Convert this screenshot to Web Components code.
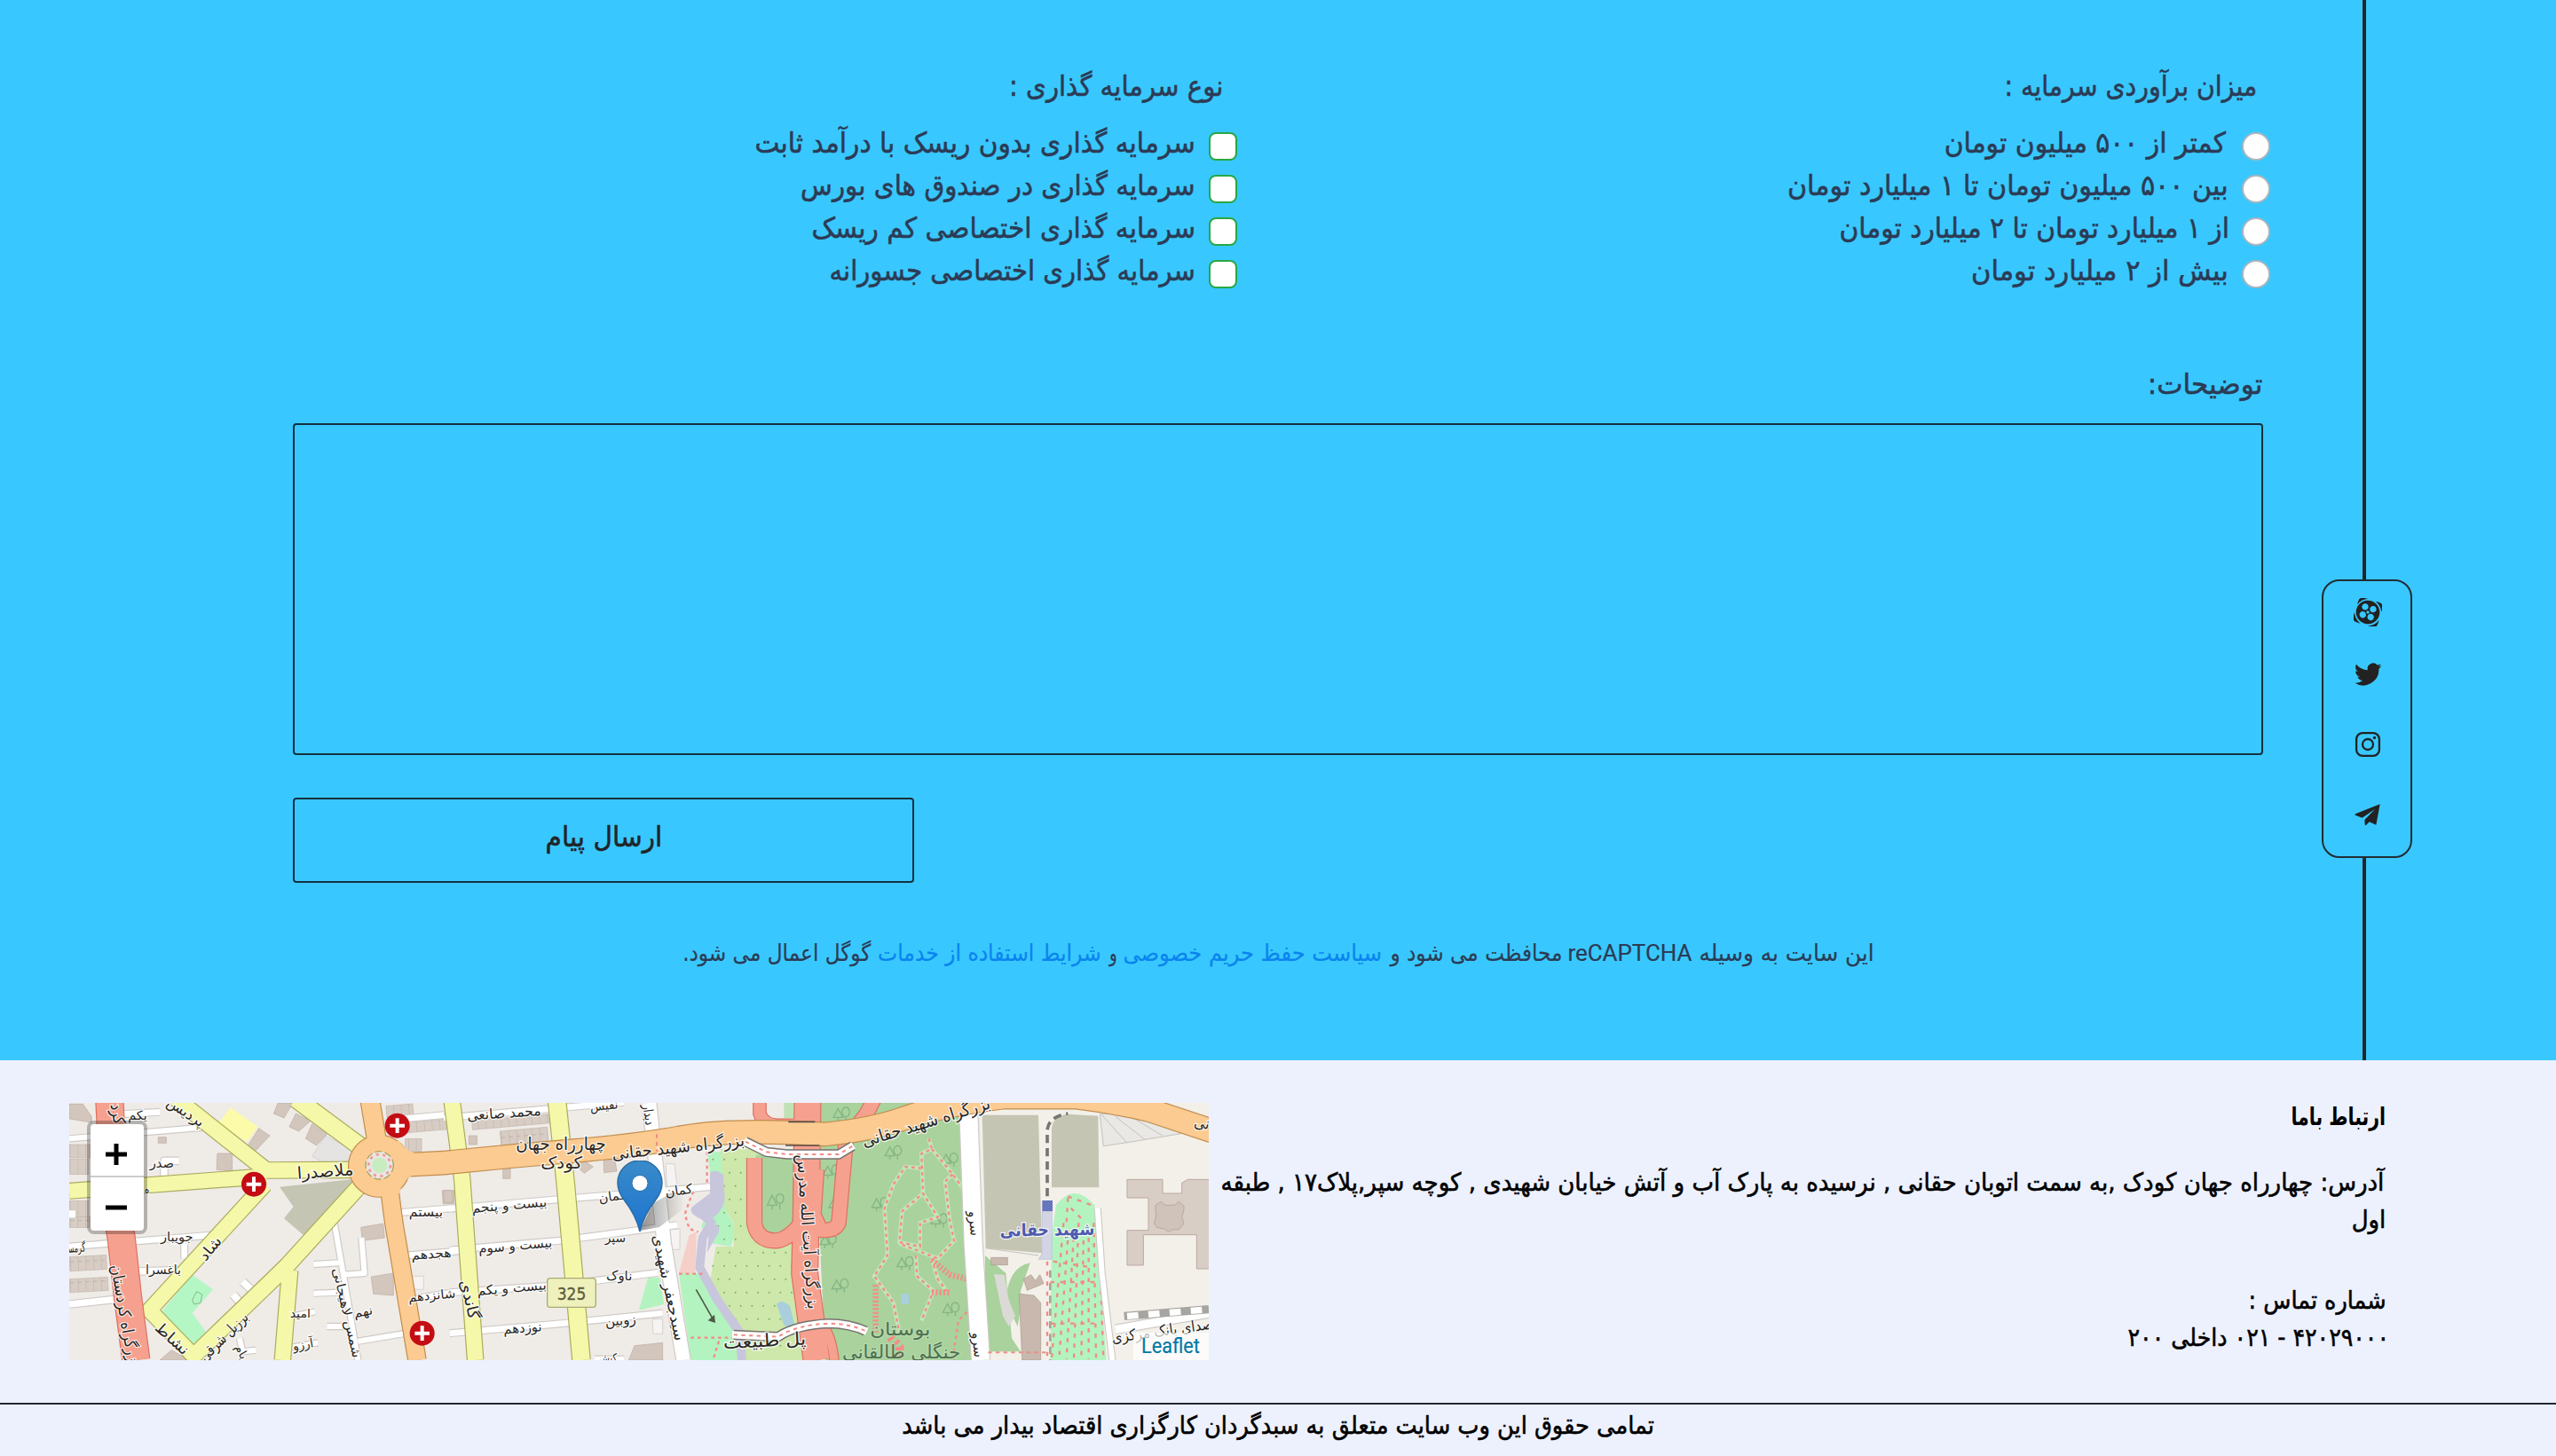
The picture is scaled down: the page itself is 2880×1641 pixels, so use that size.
<!DOCTYPE html>
<html lang="fa" dir="rtl">
<head>
<meta charset="utf-8">
<title>ارتباط باما</title>
<style>
html,body{margin:0;padding:0}
body{width:2880px;height:1641px;overflow:hidden;font-family:"DejaVu Sans",Roboto,sans-serif;background:#edf1fe}
</style>
</head>
<body>
<contact-page></contact-page>
<script>
const define = (name, html, setup) => customElements.define(name, class extends HTMLElement {
  connectedCallback() {
    if (this.shadowRoot) return;
    const t = document.createElement('template');
    t.innerHTML = typeof html === 'function' ? html(this) : html;
    this.attachShadow({mode: 'open'}).appendChild(t.content.cloneNode(true));
    if (setup) setup(this, this.shadowRoot);
  }
});

/* One line of text condensed so its ink spans exactly `w` pixels. */
const pen = document.createElement('canvas').getContext('2d');
define('fit-text', el => `<style>
:host{display:block;flex:none;direction:rtl;text-align:right;white-space:nowrap;width:${el.getAttribute('w')}px}
span{display:inline-block;transform-origin:100% 50%;-webkit-text-stroke:var(--ink,.6px) currentColor}
</style><span>${el.getAttribute('text')}</span>`, (el, root) => {
  const span = root.querySelector('span'), cs = getComputedStyle(span);
  pen.font = `${cs.fontWeight} ${cs.fontSize} ${cs.fontFamily}`;
  pen.direction = 'rtl'; pen.textAlign = 'right';
  const m = pen.measureText(span.textContent);
  const s = +el.getAttribute('w') / (m.actualBoundingBoxLeft + m.actualBoundingBoxRight);
  span.style.transform = `translate(${-s * m.actualBoundingBoxRight}px,${el.getAttribute('dy') || 0}px) scaleX(${s})`;
});

define('choice-row', el => `<style>
:host{display:flex;height:48px;gap:17px;align-items:flex-start;line-height:48px}
i{flex:none;box-sizing:border-box;width:32px;height:32px;margin-top:13px;background:#fff}
.radio{border:2px solid #adb5bd;border-radius:50%}
.check{border:2px solid #28a745;border-radius:8px}
</style><i class="${el.getAttribute('kind')}"></i><fit-text w="${el.getAttribute('w')}" dy="1" text="${el.getAttribute('text')}"></fit-text>`);

define('choice-group', el => `<style>
:host{display:block;flex:none;width:1164px;color:#2c3b55;font-size:32px;line-height:48px}
fit-text{margin:0 17px 15px 0}
</style><fit-text w="${el.getAttribute('w')}" text="${el.getAttribute('label')}"></fit-text><slot></slot>`);

define('contact-form', `<style>
:host{display:flex;flex-direction:column;flex:none;box-sizing:border-box;width:2616px;padding:73px 66px 0 330px;color:#2c3b55;font-size:32px;line-height:48px}
.groups{display:flex;margin-right:-8px;height:255px}
.label{margin:81px 1px 20px 0}
.area{box-sizing:border-box;height:374px;border:2px solid #15303f;border-radius:4px}
.send{box-sizing:border-box;width:700px;height:96px;margin:48px auto 0 0;border:2px solid #15303f;border-radius:4px;display:flex;align-items:center;justify-content:center;color:#212529}
.note{display:flex;justify-content:center;margin-top:59px;font-size:26px;line-height:40px;gap:9px;--ink:.2px}
.note .en{font-family:Roboto,sans-serif}
.note .link{color:#0a84f0}
</style>
<div class="groups">
<choice-group w="280" label="میزان برآوردی سرمایه :">
<choice-row kind="radio" w="316" text="کمتر از ۵۰۰ میلیون تومان"></choice-row>
<choice-row kind="radio" w="493" text="بین ۵۰۰ میلیون تومان تا ۱ میلیارد تومان"></choice-row>
<choice-row kind="radio" w="435" text="از ۱ میلیارد تومان تا ۲ میلیارد تومان"></choice-row>
<choice-row kind="radio" w="286" text="بیش از ۲ میلیارد تومان"></choice-row>
</choice-group>
<choice-group w="237" label="نوع سرمایه گذاری :">
<choice-row kind="check" w="493" text="سرمایه گذاری بدون ریسک با درآمد ثابت"></choice-row>
<choice-row kind="check" w="441" text="سرمایه گذاری در صندوق های بورس"></choice-row>
<choice-row kind="check" w="429" text="سرمایه گذاری اختصاصی کم ریسک"></choice-row>
<choice-row kind="check" w="409" text="سرمایه گذاری اختصاصی جسورانه"></choice-row>
</choice-group>
</div>
<fit-text class="label" w="126" text="توضیحات:"></fit-text>
<div class="area"></div>
<div class="send"><fit-text w="127" dy="-4" text="ارسال پیام"></fit-text></div>
<div class="note">
<fit-text w="194" text="این سایت به وسیله"></fit-text>
<fit-text class="en" w="139" text="reCAPTCHA"></fit-text>
<fit-text w="194" text="محافظت می شود و"></fit-text>
<fit-text class="link" w="289" text="سیاست حفظ حریم خصوصی"></fit-text>
<fit-text w="9" text="و"></fit-text>
<fit-text class="link" w="249" text="شرایط استفاده از خدمات"></fit-text>
<fit-text w="211" text="گوگل اعمال می شود."></fit-text>
</div>`);

define('social-rail', `<style>
:host{display:flex;flex-direction:column;width:102px;margin-right:162px;direction:ltr;align-items:flex-start}
.line{width:4px;margin-left:46px;background:#222629}
.top{height:653px}.bottom{flex:1}
.box{box-sizing:border-box;width:102px;height:314px;border:2px solid #222c33;border-radius:20px;display:flex;flex-direction:column;align-items:center;padding-left:2px}
svg{display:block;width:32px;height:32px;fill:#222}
.a{margin-top:19px}.t{margin-top:38px}.i{margin-top:47px}.g{margin-top:48px}
</style>
<div class="line top"></div>
<div class="box">
<svg class="a" viewBox="0 0 96 96"><g transform="rotate(17 48 48)"><path fill-rule="evenodd" d="M48 8a40 40 0 1 0 .1 0zM34 22a11 11 0 1 1-.1 0zM62 22a11 11 0 1 1-.1 0zM34 50a11 11 0 1 1-.1 0zM62 50a11 11 0 1 1-.1 0zM48 43a5 5 0 1 0 .1 0z"/><path d="M6 34V22Q6 5 24 5h11Q14 13 6 34zM62 5h12q18 0 18 18v11Q83 13 62 5zM92 62v12q0 18-18 18H62q22-8 30-30zM35 92H23Q5 92 5 74V62q9 22 30 30z"/></g></svg>
<svg class="t" viewBox="0 0 24 24"><path d="M23.6 4.9c-.8.4-1.7.6-2.7.8 1-.6 1.7-1.500 2.100-2.600-.9.500-1.900.9-3 1.100a4.700 4.700 0 0 0-8.100 4.300C8 8.300 4.500 6.400 2.200 3.600 1 5.700 1.600 8.400 3.700 9.800c-.8 0-1.500-.2-2.100-.6v.1c0 2.300 1.600 4.200 3.800 4.600-.7.2-1.400.2-2.100.1.600 1.900 2.300 3.200 4.400 3.300A9.500 9.500 0 0 1 .7 19.200a13.400 13.400 0 0 0 20.600-11.900c.9-.7 1.700-1.500 2.300-2.400z"/></svg>
<svg class="i" viewBox="0 0 32 32"><g fill="none" stroke="#222" stroke-width="2.300"><rect x="3.100" y="3.100" width="25.800" height="25.800" rx="7"/><circle cx="16" cy="16" r="6"/></g><circle cx="23.500" cy="8.500" r="1.700"/></svg>
<svg class="g" viewBox="0 0 96 96"><path d="M6 43 89 10 76 80 53 70 42 81Q39 83 38 78L37 63 72 27 29 56 7 48Q2 46 6 43z"/></svg>
</div>
<div class="line bottom"></div>`);

/* Street map. Labels: text, centre x, centre y, length, rotation, size, class */
const labels = [
['کرد',182,62,70,80,50],['یکم',255,70,65,0,38],['پردیس',415,60,140,33,44],['صدر',337,232,82,0,40],['ملاصدرا',890,262,190,-4,50],['ه',287,320,16,0,36],
['جویبار',388,482,110,0,38],['گرمسار',40,520,78,-5,38],['باغسرا',342,594,120,0,38],['شاد',505,520,90,-50,44],
['بزرگراه کردستان',207,745,350,80,50],['نشاط',368,825,135,42,46],['برزیل شرقی',550,818,210,-45,46],['امید',805,742,70,0,36],['آرزو',815,846,70,-10,38],['بام',602,868,50,60,36],
['شمس لاهیجانی',958,735,310,77,38],['نهم',1018,735,65,-12,38],['بیستم',1230,397,115,0,38],['هجدهم',1248,540,135,-4,38],['شانزدهم',1250,680,160,-5,38],
['محمد صانعی',1494,64,250,-4,42],['نفیس',1832,38,95,-6,38],['دیدار',1978,65,70,82,40],['چهارراه جهان',1686,170,305,0,52],['کودک',1688,234,140,0,50],
['بزرگراه شهید حقانی',2083,180,450,-6,50],['کمان',2085,325,92,-8,40],['کمان',1860,345,92,-8,40],['بیست و پنجم',1512,375,255,-5,40],['سپر',1870,486,70,0,38],
['بیست و سوم',1532,512,250,-5,40],['ناوک',1883,614,88,0,40],['گاندی',1372,690,135,77,48],['بیست و یکم',1520,655,235,-5,40],['زوبین',1888,765,105,-5,40],['نوزدهم',1557,790,130,-4,40],
['سیدجعفر شهیدی',2045,650,365,78,44],['بزرگراه آیت الله مدرس',2515,460,525,86,50],['پل طبیعت',2375,835,280,-3,54],['کیش',1845,890,60,0,36],
['بزرگراه شهید حقانی',2922,95,450,-17,52],['سرو',3078,432,85,84,40],['سرو',3090,843,85,84,40],['شهید حقانی',3330,460,320,-1,52,'station'],
['بوستان',2833,795,205,0,54,'park'],['جنگلی طالقانی',2837,875,400,0,56,'park'],['نی',3852,98,52,10,48],['صدای بانک مرکزی',3720,800,345,-8,46]
];
const houses = (x, y, w, h, r = 0) => `<rect x="${x}" y="${y}" width="${w}" height="${h}" fill="url(#row)" stroke="#c3b5ab" stroke-width="2" transform="rotate(${r} ${x} ${y})"/>`;
const road = (d, w, fill, edge) => [`<path d="${d}" stroke="${edge}" stroke-width="${w + 7}"/>`, `<path d="${d}" stroke="${fill}" stroke-width="${w}"/>`];
const layer = list => { const r = list.map(a => road(...a)); return r.map(a => a[0]).join('') + r.map(a => a[1]).join(''); };
const W = ['#fff', '#cfcac6'], Y = ['#f5f8a9', '#a9aa5c'], O = ['#fbcb91', '#c18c4c'], M = ['#f6a18f', '#dd6f60'];
const trees = [[2810,200],[3000,225],[2620,375],[2765,375],[2965,430],[2850,575],[2630,650],[3005,730],[2635,70],[2600,265],[2590,500]]
  .map(([x, y]) => `<path d="M${x - 12} ${y + 15}v-12m-16 0l16-30 16 30zm42 12v-14a13 16 0 1 1 .1 0"/>`).join('');
let dots = '';
for (let y = 215; y < 880; y += 45) for (let x = 2200 + (y / 45 % 2 | 0) * 18; x < 2480; x += 38)
  if (!(x > 2300 && y < 520) && x > 2185 + Math.max(0, (y - 560) * .4)) dots += `<circle cx="${x}" cy="${y}" r="3"/>`;
let rows = '';
for (let i = 0; i < 8; i++) rows += `<path d="M${3385 + i * 17} ${430 + (i % 3) * 25}L${3345 + i * 25} 890"/>`;

define('street-map', () => `<style>
:host{display:block;position:relative;flex:none;width:1284px;height:290px;overflow:hidden;direction:ltr}
.tiles{display:block;width:1284px;height:290px}
text{font-family:"DejaVu Sans",sans-serif;fill:#2a2724;text-anchor:middle}
.halo{stroke:#fff;stroke-opacity:.7;stroke-width:10}
.face{stroke:#2a2724;stroke-width:1.500}
.station{fill:#4c5aae;font-weight:bold}.station.face{stroke:#4c5aae}
.park{fill:#4f6f50}.park.halo{stroke:#b9dcb0}.park.face{stroke:#4f6f50}
.shield{fill:#5b5c3a;stroke:#5b5c3a}
.zoom{position:absolute;left:20px;top:20px;width:60px;border:4px solid rgba(0,0,0,.25);border-radius:8px;background:#fff;background-clip:padding-box}
.zoom svg{display:block;width:60px;height:60px}
.zoom svg:first-child{height:58px;border-bottom:2px solid #ccc}
.pin{position:absolute;left:610px;top:65px;width:100px;height:84px}
.credit{position:absolute;right:0;bottom:0;height:31px;padding:0 10px;background:rgba(255,255,255,.7);color:#0078a8;font:24px/31px Roboto,sans-serif;--ink:.2px}
</style>
<svg class="tiles" viewBox="24 24 3852 870" preserveAspectRatio="none">
<defs><pattern id="row" width="26" height="70" patternUnits="userSpaceOnUse"><rect width="26" height="70" fill="#d8cdc4"/><path d="M0 0V70M0 2H14" stroke="#bcaea4" stroke-width="3"/></pattern>
<pattern id="chk" width="8" height="8" patternUnits="userSpaceOnUse"><rect width="8" height="8" fill="#8a97d6"/><path d="M0 0h4v4H0zM4 4h4v4H4z" fill="#4455a5"/></pattern></defs>
<rect x="24" y="24" width="3852" height="870" fill="#efebe7"/>
<path fill="#f3f0e9" d="M3100 24H3876V894H3130z"/>
<path fill="#c5c5b4" d="M735 308 985 282 975 315 815 470 750 415 782 375z"/>
<path fill="#fbfbaa" d="M570 40 662 105 625 155 525 95z"/>
<path fill="#b4f7c4" d="M440 605 510 655 440 735 495 810 462 860 328 740z"/>
<path d="M440 690l15-28 18 10-5 28-22 5z" fill="none" stroke="#83b890" stroke-width="3"/>
<path fill="#e5e4e3" stroke="#cccac8" stroke-width="2" d="M845 205 890 135 985 185 965 235 880 225z"/>
<g fill="#d3c6bd" stroke="#bbaca2" stroke-width="2"><path d="M24 28H70L100 70V90L24 78zM730 24H780L750 75 715 60zM790 60 840 85 800 120 768 105zM845 95 895 130 860 168 823 145zM665 110 702 135 655 185 630 165zM525 195H575V255L522 250zM325 140H352V160H325zM1010 445 1085 432 1090 480 1015 490zM1045 612 1120 600 1120 675 1052 670zM1285 320H1325V365H1288z"/><path d="M1290 320H1320V360H1290zM1375 135H1402V165H1375zM1490 245H1515V280H1490zM1735 235 1765 220 1795 240 1765 262zM1830 215H1868L1875 255 1832 260zM1935 845 2030 835V894H1915zM330 894 370 860 430 894z"/></g>
${houses(24,165,70,45)}${houses(24,215,65,50)}${houses(24,355,65,55)}${houses(24,410,95,35)}${houses(24,545,125,48,-3)}${houses(24,620,130,45,-3)}${houses(1095,35,90,40,-5)}${houses(1165,90,140,35,-5)}${houses(1160,145,55,42)}${houses(1385,85,260,30,-5)}${houses(1480,120,160,50,-5)}
<path fill="#f6f4f2" stroke="#c9c4c1" stroke-width="2" d="M2040 230H2070L2078 300 2045 310zM2050 450H2088V520H2056zM1995 755H2030V805H1998zM1170 610H1222V655H1178z"/>
<path fill="#b3f3bf" d="M2180 190 2235 190 2245 390 2280 450 2260 510 2200 500 2160 440 2205 350zM2085 600 2160 600 2290 800V894H2125zM1980 615H2020L2035 705 1950 725z"/>
<path fill="#cde8aa" d="M2225 180H2510V894H2290L2270 800 2190 630 2210 510 2270 510 2270 430 2240 380z"/>
<g fill="#7fae68">${dots}</g>
<path fill="#a9d29c" d="M2345 200H2480V480H2370L2340 430zM2540 24H3060L3090 894H2580zM2560 180H2600V450H2545zM3120 540 3190 600 3210 820 3240 865 3120 865z"/>
<path fill="#bfe3b4" d="M2440 24H2480V75H2440z"/>
<g fill="none" stroke="#86b584" stroke-width="4">${trees}<path d="M2400 385v-15m-16 0l16-34 16 34zm42 14v-20a13 16 0 1 1 .1 0"/></g>
<path fill="none" stroke="#c8c6dd" stroke-width="30" stroke-linejoin="round" d="M2205 280 2215 350 2165 400 2195 430 2165 480 2155 580 2215 690 2290 800 2298 894"/>
<path fill="#c8c6dd" d="M2190 260Q2210 245 2235 268L2240 350Q2230 400 2180 425 2110 400 2130 375L2190 330zM2190 430Q2225 430 2220 460L2180 530z"/>
<path fill="#f5cfc8" d="M2120 470 2145 460 2140 600H2085z"/>
<path fill="#a9cfdc" d="M2415 705Q2430 685 2460 710L2475 770Q2455 790 2440 775zM2835 670H2862V705H2838z"/>
<g fill="none" stroke="#c3e4b8" stroke-width="14"><path d="M2930 145 2940 180 2905 195 2910 330 2960 410 2900 430 2900 510 2830 495 2840 390 2910 330M2940 180 3010 265 3050 320M3010 265 2985 290 3000 420 3015 490 2960 550 2830 500M2905 245 2850 240 2810 300 2780 380 2790 540 2745 610 2810 700 2830 800M2885 540 2890 610 2945 660 2905 760M2940 550 2960 620 2990 660"/></g>
<g fill="none" stroke="#f58b86" stroke-width="7" stroke-dasharray="11 12"><path d="M2930 145 2940 180 2905 195 2910 330 2960 410 2900 430 2900 510 2830 495 2840 390 2910 330M2940 180 3010 265 3050 320M3010 265 2985 290 3000 420 3015 490 2960 550 2830 500M2905 245 2850 240 2810 300 2780 380 2790 540 2745 610 2810 700 2830 800M2885 540 2890 610 2945 660 2905 760M2940 550 2960 620 2990 660M2180 190V300L2130 330 2105 400 2120 450 2150 460M2085 602H2170M2125 818H2280M2220 830 2200 894M3010 890 3030 760 3060 730M3050 320 3065 640"/><path stroke-width="20" stroke-dasharray="6 7" d="M2750 640V800M2940 555 3000 605 3060 620M2940 665H3005"/><path stroke-width="30" d="M2800 815 2830 850 2830 894"/></g>
<path fill="#c5c5b4" d="M3110 65H3300L3312 532 3122 515zM3345 310V110Q3350 65 3400 62L3502 68 3505 310z"/>
<path fill="#b3f3bf" d="M3345 480 3360 370Q3420 290 3490 370L3530 894H3340z"/>
<g stroke="#f08c85" stroke-width="7" stroke-dasharray="14 20" fill="none">${rows}<path d="M3330 560V894M3400 340 3480 370M3400 345 3395 430M3410 380 3450 420M3350 560 3480 580M3340 630H3500M3340 770H3510"/></g>
<path fill="#d3d5e5" stroke="#b9bcd6" stroke-width="2" d="M3312 390H3346V553H3300L3312 535z"/>
<path d="M3330 340V120Q3332 70 3400 60" fill="none" stroke="#777570" stroke-width="11" stroke-dasharray="28 17"/>
<path d="M3340 590V894" fill="none" stroke="#aaa49d" stroke-width="8" stroke-dasharray="25 18"/>
<rect x="3313" y="354" width="35" height="36" fill="url(#chk)"/>
<path fill="#a9d29c" d="M3190 700Q3195 580 3272 565L3240 660 3240 720 3230 780z"/>
<path fill="#dcdad6" d="M3150 603 3185 605 3200 690 3222 745 3200 780 3180 745z"/>
<path fill="#c9b8ad" stroke="#a99a90" stroke-width="2" d="M3250 620 3275 605 3290 625 3305 605 3318 635 3262 658zM3140 547H3196V572H3140zM3235 670 3285 675 3308 700V894H3245z"/>
<path fill="#d9cec6" stroke="#b8a99f" stroke-width="3" d="M3600 283H3720V330H3785V295L3805 283H3880V585H3835V470H3655V573H3600V455H3672V345H3600z"/>
<path fill="#d0c3ba" stroke="#b8a99f" stroke-width="3" d="M3695 370 3715 358 3730 370H3760L3775 358 3792 372V385L3785 410 3792 432 3775 452H3755L3740 460 3725 450 3700 445 3692 432 3698 405z"/>
<path fill="#e9e8e5" stroke="#c3c1bd" stroke-width="3" d="M3508 62 3600 60 3800 125 3600 158 3520 170zM3515 65 3600 160M3560 70 3660 148M3620 75 3720 135M3122 515 3300 540"/>
<g fill="none" stroke-linejoin="round" stroke-linecap="butt">
${layer([['M24 145 500 105',18,...W],['M200 62 330 55',20,...W],['M345 290V220H395',22,...W],['M24 510 520 470',20,...W],['M250 594 400 590',22,...W],['M413 500V550',20,...W],['M24 705 180 688',22,...W],['M24 400H45',24,...W],['M610 628 660 675M578 672 615 715',24,...W],['M920 430 950 600 1000 894M850 570 935 565M1012 480 1022 600 950 605M850 668 940 665M895 780 960 780M1000 830 1180 800M780 745 855 730M780 850 865 835M600 820 610 865 655 860',18,...W],['M1140 395 1320 380M1160 540 1340 525M1170 690 1320 665M1130 80 1290 65',20,...W],
['M1290 75 1900 22',20,...W],['M1310 382 1680 350 2190 308',20,...W],['M1310 522 1680 490 2080 437',20,...W],['M1310 665 1690 640 2015 598',20,...W],['M1310 803 1690 770 2030 735',20,...W],['M1800 890H1900',18,...W],['M1985 24 2010 260 2035 500 2100 894',46,...W],['M3500 380 3515 600 3550 894',18,...W],['M3560 790 3876 735',28,...W],['M3063 24 3080 500 3105 894',60,...W]])}
${layer([['M385 10 690 252 1000 250',52,...Y],['M24 322 690 272',50,...Y],['M790 10 1040 195',58,...Y],['M685 300 295 725 450 885',50,...Y],['M1010 300 760 575 430 894',52,...Y],['M770 590 745 894',52,...Y],['M1318 20 1352 280 1397 894',52,...Y],['M1673 20 1702 300 1755 894',58,...Y]])}
${layer([['M160 10 175 330 200 480 222 680 250 894',90,...M],['M2358 10V60Q2370 100 2420 100H2480',40,...M],['M2520 10 2515 400 2510 600 2550 894',86,...M],['M2340 210V430Q2350 490 2410 490 2450 490 2500 430',48,...M],['M2540 450Q2610 465 2625 430L2650 150 2720 60 2745 10',46,...M],['M2560 250 2550 400 2570 445 2620 460',28,...M],['M2560 760Q2600 800 2610 894',28,...M]])}
${layer([['M1040 10 1065 160',62,...O],['M1105 300Q1120 430 1130 480L1200 894',58,...O],['M1130 235 1290 227Q1500 205 1720 187T2100 140 2580 130Q2740 115 2850 75T3180 5H3430Q3560 20 3680 50L3890 120',76,...O],['M1073 150A88 88 0 1 1 1072 150z',30,...O]])}
</g>
<circle cx="1073" cy="235" r="85" fill="#fbcb91"/><path d="M1135 150Q1170 195 1210 198L1200 262Q1150 280 1140 330L1075 320z" fill="#fbcb91"/>
<circle cx="1073" cy="235" r="36" fill="#c6ecc0" stroke="#e8e6e4" stroke-width="20"/><circle cx="1073" cy="235" r="37" fill="none" stroke="#f09a92" stroke-width="8" stroke-dasharray="10 13"/><circle cx="1073" cy="235" r="47" fill="none" stroke="#a9a35e" stroke-width="4" stroke-dasharray="24 10"/>
<g fill="none"><path stroke="#77716d" stroke-width="34" d="M2310 155 2380 190 2450 198 2625 198 2672 170M2270 808 2420 815Q2480 775 2590 770 2660 770 2715 795"/><path stroke="#fff" stroke-width="25" d="M2305 153 2380 190 2450 198 2625 198 2675 168M2265 808 2420 815Q2480 775 2590 770 2660 770 2720 797"/><path stroke="#f08c85" stroke-width="6" stroke-dasharray="13 13" d="M2310 155 2380 190 2450 198 2625 198 2672 170M2270 808 2420 815Q2480 775 2590 770 2660 770 2715 795M2010 130V190M3130 868H3340"/><path stroke="#5a4b44" stroke-width="5" d="M2455 88H2545M2445 168H2560"/><path stroke="#a7a5a1" stroke-width="28" d="M3590 745 3876 722"/><path stroke="#fff" stroke-width="22" stroke-dasharray="38 34" d="M3600 745 3876 722"/></g>
<path d="M2143 655 2200 755" stroke="#4e5a45" stroke-width="5"/><path d="M2183 760 2208 768 2205 740z" fill="#4e5a45"/>
<rect x="1640" y="617" width="164" height="98" rx="10" fill="#eff1bd" stroke="#a9aa72" stroke-width="4"/><text class="shield" x="1722" y="689" font-size="56" textLength="98" lengthAdjust="spacingAndGlyphs">325</text>
${labels.map(([t, x, y, l, r, s, c]) => ['halo', 'face'].map(k => `<text class="${c || ''} ${k}"${k === 'halo' ? ' aria-hidden="true"' : ''} x="${x}" y="${y + s * .25}" font-size="${s * 1.12}" textLength="${l}" lengthAdjust="spacingAndGlyphs" transform="rotate(${r} ${x} ${y})">${t}</text>`)[1].replace('face"', 'face" paint-order="normal"')).map((face, i) => {
  const halo = face.replace(/face" paint-order="normal"/, 'face" style="stroke:' + (labels[i][6] === 'park' ? '#b9dcb0' : '#fff') + ';stroke-width:8;stroke-opacity:.75;paint-order:stroke"');
  return halo;
}).join('')}
${[[1133,101],[648,299],[1217,803]].map(([x, y]) => `<circle cx="${x}" cy="${y}" r="42" fill="#c40c14"/><path d="M${x - 25} ${y}h50M${x} ${y - 25}v50" stroke="#fff" stroke-width="12"/>`).join('')}
</svg>
<svg class="pin" viewBox="0 0 100 84"><defs><linearGradient id="b" x2="0" y2="1"><stop stop-color="#3a8bc9"/><stop offset="1" stop-color="#1c74d0"/></linearGradient><linearGradient id="s" x1="0" x2="1"><stop stop-color="#000" stop-opacity=".4"/><stop offset="1" stop-color="#000" stop-opacity="0"/></linearGradient></defs>
<path d="M33 79 48 48 70 36Q90 36 80 56L55 75z" fill="url(#s)"/>
<path d="M33 80Q29 62 15 44 8 35 8 25A25 25 0 0 1 58 25Q58 35 51 44 37 62 33 80z" fill="url(#b)" stroke="#2b6da6" stroke-width="1.500"/><circle cx="33" cy="25.500" r="9" fill="#fff" stroke="#2e72ad" stroke-width="1"/></svg>
<div class="zoom"><svg viewBox="0 0 60 58"><path d="M17 34H41M29 22V46" stroke="#000" stroke-width="5"/></svg><svg viewBox="0 0 60 60"><path d="M17 34H41" stroke="#000" stroke-width="5"/></svg></div>
<div class="credit"><fit-text w="65" text="Leaflet"></fit-text></div>`);

define('site-footer', `<style>
:host{display:block;height:446px;background:#edf1fe;color:#000;font-size:28px;line-height:42px}
.main{display:flex;justify-content:space-between;box-sizing:border-box;height:388px;padding:48px 193px 0 78px;border-bottom:2px solid #1f2735}
.info{width:1320px;margin-top:-5px}
.h{font-weight:bold;margin-bottom:32px;--ink:0px}
.p{margin-top:49px}
.copy{display:flex;justify-content:center;padding-top:3px}
</style>
<div class="main"><div class="info">
<fit-text class="h" w="104" text="ارتباط باما"></fit-text>
<fit-text w="1311" text="آدرس: چهارراه جهان کودک ,به سمت اتوبان حقانی , نرسیده به پارک آب و آتش خیابان شهیدی , کوچه سپر,پلاک۱۷ , طبقه"></fit-text>
<fit-text w="36" text="اول"></fit-text>
<fit-text class="p" w="151" text="شماره تماس :"></fit-text>
<fit-text w="289" text="۴۲۰۲۹۰۰۰ - ۰۲۱ داخلی ۲۰۰"></fit-text>
</div><street-map></street-map></div>
<div class="copy"><fit-text w="846" text="تمامی حقوق این وب سایت متعلق به سبدگردان کارگزاری اقتصاد بیدار می باشد"></fit-text></div>`);

define('contact-page', `<style>
:host{display:block;width:2880px;height:1641px}
.hero{display:flex;height:1195px;background:#38c8ff}
</style><div class="hero"><social-rail></social-rail><contact-form></contact-form></div><site-footer></site-footer>`);
</script>
</body>
</html>
